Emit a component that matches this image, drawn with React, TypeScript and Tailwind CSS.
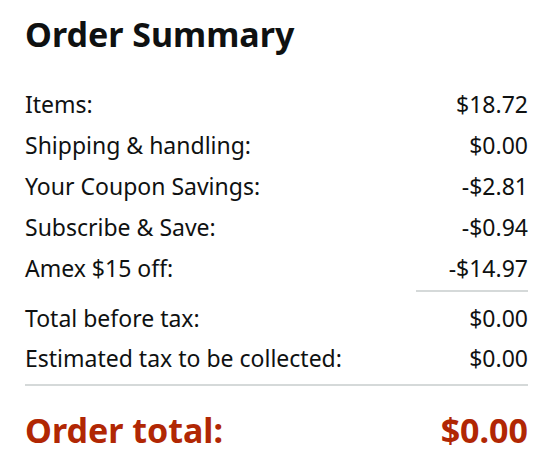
import React from 'react';

const rows = [
    { label: 'Items:', value: '$18.72' },
    { label: 'Shipping & handling:', value: '$0.00' },
    { label: 'Your Coupon Savings:', value: '-$2.81' },
    { label: 'Subscribe & Save:', value: '-$0.94' },
    { label: 'Amex $15 off:', value: '-$14.97' }
];

const totals = [
    { label: 'Total before tax:', value: '$0.00' },
    { label: 'Estimated tax to be collected:', value: '$0.00' }
];

export default function App() {
    return (
        <div className="w-[556px] h-[472px] bg-white text-[#0f1111] font-['Noto_Sans',sans-serif] pl-[25px] pr-[28px] pt-[14px]">
            <h1 className="text-[34px] font-bold leading-[40px]">Order Summary</h1>

            <div className="mt-[30px] text-[23px]">
                {rows.map(r => (
                    <div key={r.label} className="flex justify-between h-[41px] leading-[41px]">
                        <span>{r.label}</span>
                        <span>{r.value}</span>
                    </div>
                ))}

                <div className="flex justify-end mt-[1px]">
                    <div className="w-[112px] h-[2px] bg-[#d5d9d9]" />
                </div>

                <div className="mt-[6px]">
                    {totals.map(r => (
                        <div key={r.label} className="flex justify-between h-[40px] leading-[40px]">
                            <span>{r.label}</span>
                            <span>{r.value}</span>
                        </div>
                    ))}
                </div>

                <div className="h-[2px] bg-[#d5d9d9] mt-[6px]" />
            </div>

            <div className="flex justify-between mt-[22px] text-[34px] font-bold leading-[44px] text-[#b12704]">
                <span>Order total:</span>
                <span>$0.00</span>
            </div>
        </div>
    );
}
